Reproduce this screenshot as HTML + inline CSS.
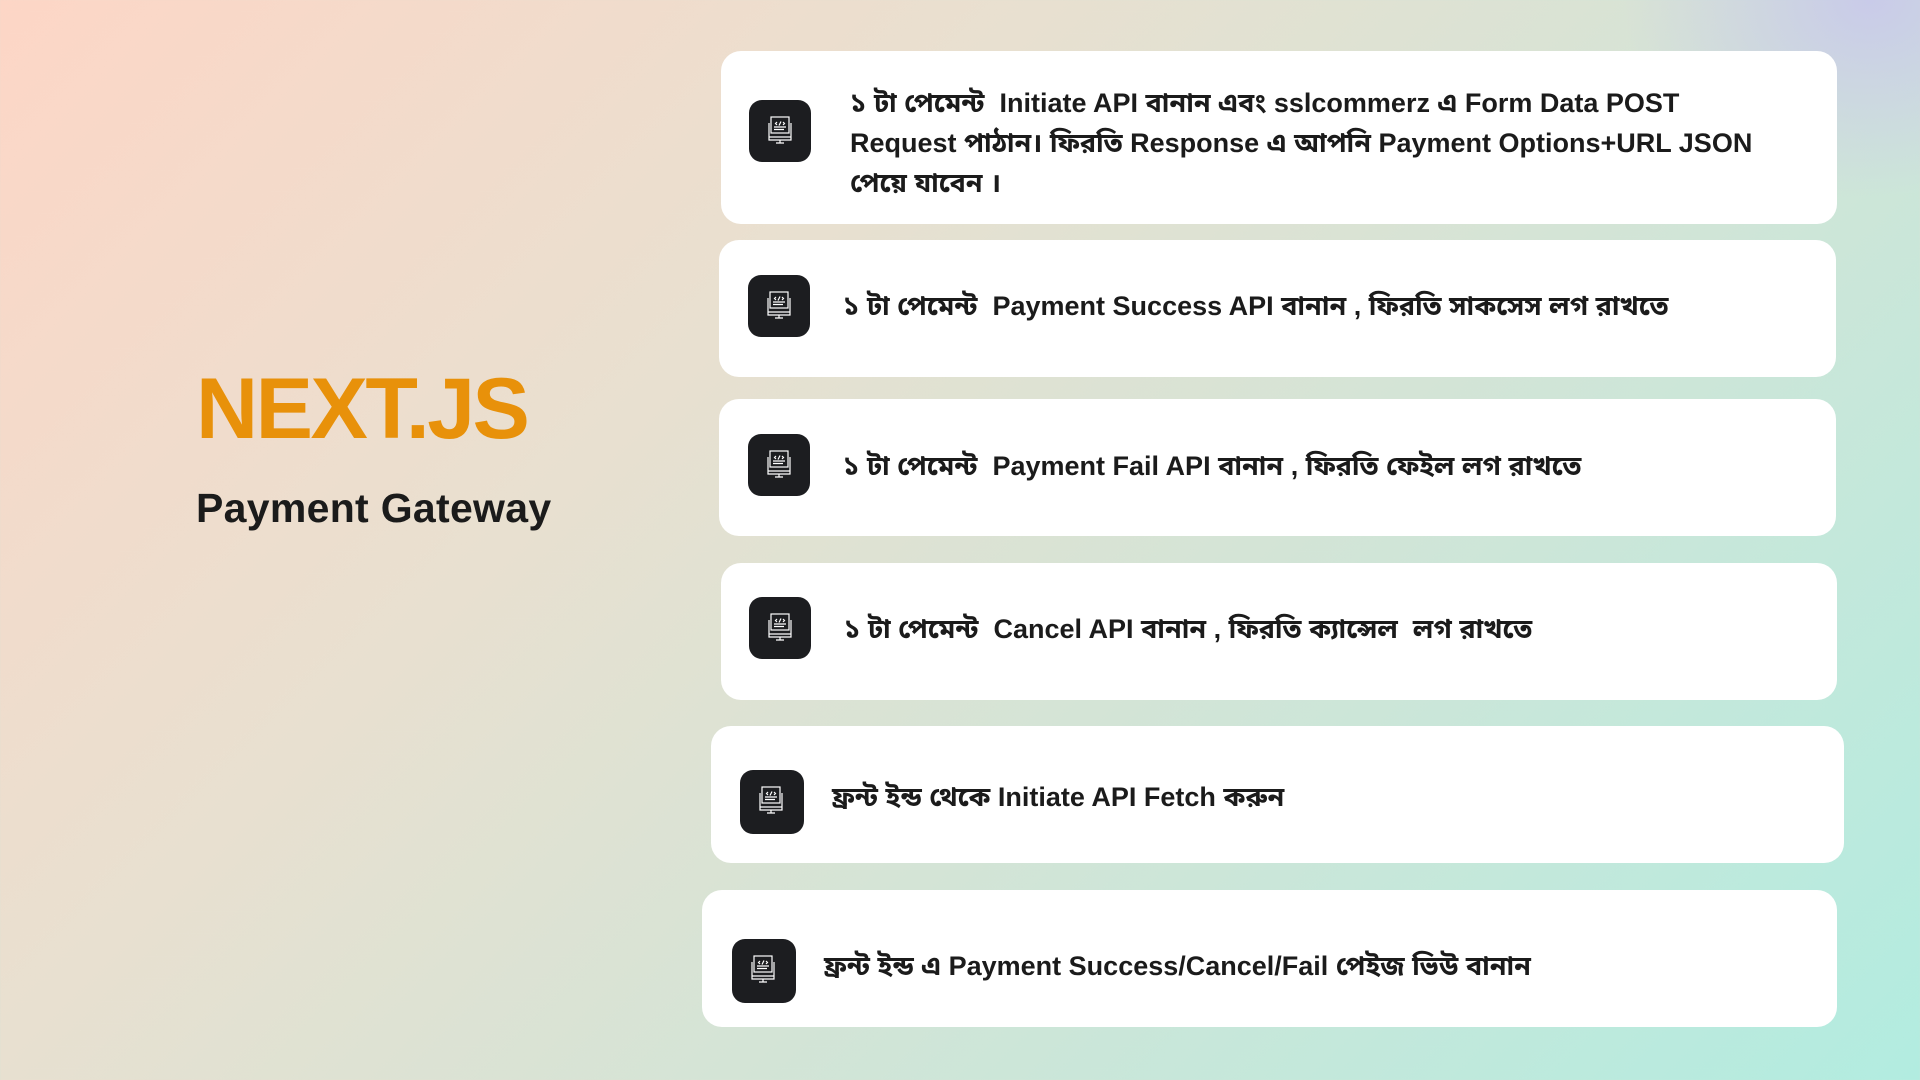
<!DOCTYPE html>
<html><head><meta charset="utf-8"><style>
html,body{margin:0;padding:0}
body{width:1920px;height:1080px;position:relative;overflow:hidden;font-family:"Liberation Sans","Noto Sans Bengali","Noto Sans CJK SC",sans-serif;
background:linear-gradient(135deg,#fdd6c6 0%,#e8e0d0 35%,#d4e4d6 60%,#b2ece0 100%);}
.glow{position:absolute;right:-200px;top:-200px;width:500px;height:400px;background:radial-gradient(ellipse at center,rgba(200,200,235,.9),rgba(200,200,235,0) 70%);}
.card{position:absolute;background:#fff;border-radius:20px;}
.icon{position:absolute;width:62px;height:62px;border-radius:13px;background:#1c1d20;}
.icon svg{position:absolute;left:17px;top:15px}
.t{position:absolute;font-weight:bold;font-size:27px;color:#1b1b1b;line-height:40px;white-space:nowrap}
h1{position:absolute;left:196px;top:360px;margin:0;font-size:86px;color:#e8910a;font-weight:bold;letter-spacing:-2.5px}
h2{position:absolute;left:196px;top:485px;margin:0;font-size:41px;color:#1b1b1b;font-weight:bold;letter-spacing:0.3px}
</style></head><body>
<div class="glow"></div>
<h1>NEXT.JS</h1>
<h2>Payment Gateway</h2>

<div class="card" style="left:721px;top:51px;width:1116px;height:173px"></div>
<div class="card" style="left:719px;top:240px;width:1117px;height:137px"></div>
<div class="card" style="left:719px;top:399px;width:1117px;height:137px"></div>
<div class="card" style="left:721px;top:563px;width:1116px;height:137px"></div>
<div class="card" style="left:711px;top:726px;width:1133px;height:137px"></div>
<div class="card" style="left:702px;top:890px;width:1135px;height:137px"></div>

<div class="icon" style="left:749px;top:100px"><svg width="28" height="32" viewBox="0 0 28 32" fill="none" stroke="#fff" stroke-width="1.2"><rect x="5" y="2" width="18" height="16"/><path d="M3 8v14h22V8M3 22v3h22v-3M10 28h8M14 25v3M8 12h12M8 14.5h10M11 7l-1.5 1.5L11 10M17 7l1.5 1.5L17 10M15 6.5l-2 4"/></svg></div>
<div class="icon" style="left:748px;top:275px"><svg width="28" height="32" viewBox="0 0 28 32" fill="none" stroke="#fff" stroke-width="1.2"><rect x="5" y="2" width="18" height="16"/><path d="M3 8v14h22V8M3 22v3h22v-3M10 28h8M14 25v3M8 12h12M8 14.5h10M11 7l-1.5 1.5L11 10M17 7l1.5 1.5L17 10M15 6.5l-2 4"/></svg></div>
<div class="icon" style="left:748px;top:434px"><svg width="28" height="32" viewBox="0 0 28 32" fill="none" stroke="#fff" stroke-width="1.2"><rect x="5" y="2" width="18" height="16"/><path d="M3 8v14h22V8M3 22v3h22v-3M10 28h8M14 25v3M8 12h12M8 14.5h10M11 7l-1.5 1.5L11 10M17 7l1.5 1.5L17 10M15 6.5l-2 4"/></svg></div>
<div class="icon" style="left:749px;top:597px"><svg width="28" height="32" viewBox="0 0 28 32" fill="none" stroke="#fff" stroke-width="1.2"><rect x="5" y="2" width="18" height="16"/><path d="M3 8v14h22V8M3 22v3h22v-3M10 28h8M14 25v3M8 12h12M8 14.5h10M11 7l-1.5 1.5L11 10M17 7l1.5 1.5L17 10M15 6.5l-2 4"/></svg></div>
<div class="icon" style="left:740px;top:770px;width:64px;height:64px"><svg width="28" height="32" viewBox="0 0 28 32" fill="none" stroke="#fff" stroke-width="1.2"><rect x="5" y="2" width="18" height="16"/><path d="M3 8v14h22V8M3 22v3h22v-3M10 28h8M14 25v3M8 12h12M8 14.5h10M11 7l-1.5 1.5L11 10M17 7l1.5 1.5L17 10M15 6.5l-2 4"/></svg></div>
<div class="icon" style="left:732px;top:939px;width:64px;height:64px"><svg width="28" height="32" viewBox="0 0 28 32" fill="none" stroke="#fff" stroke-width="1.2"><rect x="5" y="2" width="18" height="16"/><path d="M3 8v14h22V8M3 22v3h22v-3M10 28h8M14 25v3M8 12h12M8 14.5h10M11 7l-1.5 1.5L11 10M17 7l1.5 1.5L17 10M15 6.5l-2 4"/></svg></div>

<div class="t" style="left:850px;top:83px">১ টা পেমেন্ট&nbsp; Initiate API বানান এবং sslcommerz এ Form Data POST<br>Request পাঠান। ফিরতি Response এ আপনি Payment Options+URL JSON<br>পেয়ে যাবেন ।</div>
<div class="t" style="left:843px;top:286px">১ টা পেমেন্ট&nbsp; Payment Success API বানান , ফিরতি সাকসেস লগ রাখতে</div>
<div class="t" style="left:843px;top:446px">১ টা পেমেন্ট&nbsp; Payment Fail API বানান , ফিরতি ফেইল লগ রাখতে</div>
<div class="t" style="left:844px;top:609px">১ টা পেমেন্ট&nbsp; Cancel API বানান , ফিরতি ক্যান্সেল&nbsp; লগ রাখতে</div>
<div class="t" style="left:832px;top:777px">ফ্রন্ট ইন্ড থেকে Initiate API Fetch করুন</div>
<div class="t" style="left:824px;top:946px">ফ্রন্ট ইন্ড এ Payment Success/Cancel/Fail পেইজ ভিউ বানান</div>
</body></html>
